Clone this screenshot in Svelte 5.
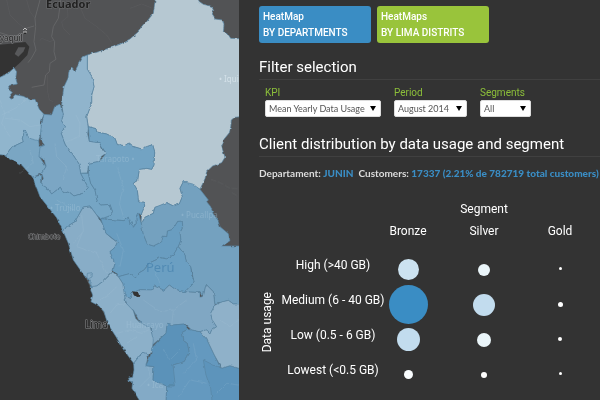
<script>
  const departments = [
    { name: 'Loreto', fill: '#b6c8d2', d: 'M262 165L300 154L360 133L390 117L415 95L440 65L460 40L468 -20L590 -20L597 4L610 13L635 19L641 32L637 45L645 57L667 60L672 75L670 95L685 104L692 115L740 117V348L704 352L694 360L692 384L688 398L672 418L665 440L675 472L665 488L638 498L620 515L615 536L600 568L578 557L550 545L540 565L547 590L538 612L520 618L500 608L480 618L465 622L460 640L435 652L423 672L425 640L434 618L432 608L415 602L412 570L400 550L413 540L418 508L440 505L455 508L462 495L464 455L458 434L440 440L425 447L395 438L385 430L374 437L352 434L345 415L320 402L290 396L288 386L265 380L260 350L275 310L275 285L282 260L276 230L262 208Z' },
    { name: 'Piura', fill: '#90b5cd', d: 'M-20 238L0 232L25 220L42 204L50 215L47 235L52 252L32 256L25 265L38 275L27 290L34 298L45 284L70 289L90 299L105 298L118 328L132 343L122 368L125 390L116 422L103 428L88 415L75 390L67 415L70 425L35 442L17 466L-20 462Z' },
    { name: 'Lambayeque', fill: '#7aa6c3', d: 'M75 390L88 415L116 422L118 440L135 435L118 470L138 500L125 520L98 532L65 495L15 468L35 442L70 425L67 415Z' },
    { name: 'Amazonas', fill: '#90b4cc', d: 'M262 165L250 170L235 194L225 213L215 201L208 210L204 235L192 260L185 312L190 345L184 362L196 380L183 402L196 435L216 460L237 492L242 520L262 519L266 490L300 484L303 470L318 460L307 446L298 428L268 424L263 402L265 385L260 350L275 310L275 285L282 260L276 230L262 208Z' },
    { name: 'Cajamarca', fill: '#7ba6c4', d: 'M132 343L155 345L164 320L180 312L190 345L184 362L196 380L183 402L196 435L216 460L237 492L242 520L265 563L248 580L222 588L204 573L190 578L181 562L155 582L143 565L125 554L130 535L125 520L138 500L133 480L117 470L120 442L134 436L122 418L122 390Z' },
    { name: 'La Libertad', fill: '#75a5c4', d: 'M98 532L125 525L125 554L143 565L155 582L181 562L190 578L204 573L222 588L248 580L265 563L242 520L265 520L272 550L285 570L292 603L302 615L330 613L338 635L325 650L302 656L290 645L270 618L250 621L225 665L200 680L190 695L170 653L120 590Z' },
    { name: 'San Martin', fill: '#72a3c3', d: 'M265 380L288 386L290 396L320 402L345 415L352 434L374 437L385 430L395 438L425 447L440 440L458 434L464 455L462 495L455 508L440 505L418 508L413 540L400 550L412 570L415 602L432 608L434 618L423 645L416 640L408 652L409 670L400 682L396 665L390 672L385 652L372 662L302 656L325 650L338 635L330 613L302 615L292 603L285 570L272 550L265 520L266 490L300 484L318 460L298 428L268 424Z' },
    { name: 'Ancash', fill: '#88adc7', d: 'M190 695L200 680L225 665L250 621L270 618L290 645L310 675L318 700L337 716L352 727L345 742L330 755L336 768L345 790L338 816L325 828L312 842L290 858L276 862L262 840L220 780L205 730Z' },
    { name: 'Huanuco', fill: '#699dc0', d: 'M302 656L372 662L385 652L390 672L396 665L400 682L409 670L408 652L416 640L424 672L430 703L442 732L460 738L485 725L490 708L500 710L502 693L518 688L533 664L547 663L548 680L540 695L543 720L535 740L520 765L500 777L482 773L450 788L432 810L418 818L405 832L392 820L355 830L340 810L345 790L330 755L345 742L352 727L318 700Z' },
    { name: 'Ucayali', fill: '#74a1bf', d: 'M424 672L435 652L460 640L465 622L500 608L520 618L538 612L547 590L540 565L550 545L578 552L600 568L625 600L620 605L632 620L640 642L655 662L660 680L685 701L690 722L668 738L740 738V912L700 912L685 901L663 907L645 910L640 875L618 853L610 888L600 878L555 875L582 845L572 800L558 784L555 765L535 740L543 720L540 695L548 680L547 663L533 664L518 688L502 693L500 710L490 708L485 725L460 738L442 732L430 703Z' },
    { name: 'Pasco', fill: '#6b9fc2', d: 'M355 830L392 820L405 832L418 818L432 810L450 788L482 773L500 777L520 765L535 740L555 765L558 784L572 800L575 825L582 845L555 875L525 868L508 855L492 871L462 858L455 870L420 869L395 880L390 893L372 885L368 850Z' },
    { name: 'Junin', fill: '#80a7c3', d: 'M372 885L390 893L395 880L420 869L455 870L462 858L492 871L508 855L525 868L555 875L600 878L600 892L610 890L618 853L640 875L645 915L632 940L637 960L650 980L635 990L630 1002L617 990L600 995L575 990L555 972L520 975L502 970L498 1000L457 1035L454 985L420 968L400 930L384 925Z' },
    { name: 'Lima', fill: '#8cb0c9', d: 'M338 816L355 830L368 850L377 908L400 932L407 955L420 968L450 980L460 1020L457 1048L445 1065L425 1060L401 1090L370 1048L348 1010L335 990L322 968L312 935L297 918L273 905L278 886L270 860L290 858L312 842Z' },
    { name: 'Ica', fill: '#83aac6', d: 'M401 1090L425 1060L445 1065L438 1097L462 1100L459 1140L500 1158L498 1220H430L396 1165L398 1145L388 1142L386 1134L398 1132L402 1110Z' },
    { name: 'Huancavelica', fill: '#5b92b9', d: 'M502 970L520 975L552 972L564 988L547 997L552 1022L562 1030L569 1060L552 1085L519 1095L526 1122V1158H500L459 1140L462 1100L438 1097L453 1062L455 1044L485 1012L498 1000Z' },
    { name: 'Ayacucho', fill: '#6499bf', d: 'M564 988L575 990L600 995L620 1017L643 1065L660 1100L690 1115V1220H498L500 1158H526L519 1095L552 1085L569 1060L562 1030L552 1022L547 997Z' },
    { name: 'Apurimac', fill: '#5d94bb', d: 'M610 1080L640 1095L665 1105L690 1097L740 1112V1220H638L632 1165L618 1125Z' },
    { name: 'Cusco', fill: '#8fb1c9', d: 'M645 915L663 907L685 901L700 912H740V1112L690 1097L665 1105L643 1065L620 1017L600 995L617 990L630 1002L635 990L650 980L637 960L632 940Z' }
  ];

  const segments = ['Bronze', 'Silver', 'Gold'];
  const usage = [
    { label: 'High (>40 GB)', dots: [[21, '#cce2f0'], [12, '#eaf5f9'], [3, '#fff']] },
    { label: 'Medium (6 - 40 GB)', dots: [[39, '#3a8dc4'], [22, '#c2dcee'], [5, '#fff']] },
    { label: 'Low (0.5 - 6 GB)', dots: [[23, '#c2dcee'], [14, '#eaf5f9'], [4, '#fff']] },
    { label: 'Lowest (<0.5 GB)', dots: [[9, '#fafdff'], [6, '#fff'], [3, '#fff']] }
  ];
</script>

<div class="app">
  <svg class="map" viewBox="0 0 240 400" preserveAspectRatio="xMinYMin slice" role="img" aria-label="Heat map of Peru by department">
    <defs>
      <filter id="rough" x="-5%" y="-5%" width="110%" height="110%" color-interpolation-filters="sRGB">
        <feTurbulence type="fractalNoise" baseFrequency="0.06" numOctaves="2" seed="4" result="n" />
        <feDisplacementMap in="SourceGraphic" in2="n" scale="9" xChannelSelector="R" yChannelSelector="G" />
      </filter>
    </defs>
    <rect width="240" height="400" fill="#525355" />
    <g transform="scale(.33333)">
      <path fill="#333" d="M-20 137L30 131L76 126L88 140L82 165L60 188L42 204L0 232L-20 240ZM-20 458L0 458L64 490L100 532L194 695L274 870L326 968L404 1090L400 1165L440 1230H-20Z" />
      <path fill="#58595b" d="M44 162L55 142L76 142L70 155L55 170Z" />
      <g fill="none" stroke="#696a6c" stroke-width="3" opacity=".8">
        <path d="M120 0L105 55L107 80L102 125L108 150L94 175L84 188M182 0L175 55L160 80L155 110L164 125L162 155L168 178L150 190L148 215L137 225L132 255L95 262M0 98L38 110L76 98L78 85L102 78" />
        <path stroke-width="2" opacity=".5" d="M20 0L30 45L55 70L76 85M240 20L255 55L290 80L320 105L335 128M200 0L204 50L185 65L190 85L210 105M80 0L90 35L105 55M160 120L150 125L125 115L120 122M142 225V270L148 300L160 305M390 25L425 12L455 24" />
        <path stroke-width="3" opacity=".5" stroke-dasharray="18 5" d="M632 538L660 548L690 565L717 566M695 578L717 590" />
      </g>
      <g filter="url(#rough)">
        <g stroke="#5885a3" stroke-width="2" stroke-linejoin="round">
          {#each departments as dep (dep.name)}
            <path d={dep.d} fill={dep.fill} />
          {/each}
        </g>
        <path fill="#333" d="M397 874L414 876L419 890L408 891L401 885Z" />
        <path fill="none" stroke="#5885a3" stroke-width="2" d="M276 862L270 846L260 840L262 820L277 818L276 831L266 836L275 850" />
        <g fill="none" stroke="#b9d3e3" stroke-width="2" opacity=".2">
          <path d="M0 300L15 340L5 370L30 410M15 355L60 360L90 380L122 375M5 345L55 320L75 300M228 345L240 370L238 410L200 425M165 430L170 470L200 500L190 540M350 500L370 560L358 610L372 655M245 645L250 690L230 740L290 760L320 820M300 900L330 880L350 860M330 940L350 915L378 910M350 1000L390 990L425 1000L455 985M380 1030L410 1010M430 900L480 935L520 930L560 900M520 930L515 975M490 1050L510 1080L540 1050M550 1120L590 1080L580 1030M535 1190L570 1140L620 1150M650 1180L680 1150L717 1155M660 960L690 980L717 960M420 1160L450 1130L445 1100M350 700L370 750L360 800M460 800L480 850M220 730L245 700M60 520L100 490L90 450M170 600L220 630" />
        </g>
      </g>
    </g>
    <g class="places">
      <text x="46" y="8" class="country">Ecuador</text>
      <text x="0" y="41">yaquil</text>
      <text x="28" y="239" class="small">Chimbote</text>
      <text x="85" y="328" class="capital">Lima</text>
    </g>
    <circle cx="25" cy="33" r="1" fill="#1c1c1c" />
    <path d="M23 30L25 28L27 30M23 32H27" stroke="#bbb" fill="none" />
    <g class="faint">
      <text x="96" y="162">Tarapoto •</text>
      <text x="50" y="211">• Trujillo</text>
      <text x="181" y="218">• Pucallpa</text>
      <text x="219" y="82" class="light">• Iqui</text>
      <text x="126" y="328">Huancayo •</text>
      <text x="147" y="388">• Ica</text>
      <text x="146" y="272" class="peru">Perú</text>
    </g>
    <rect x="239" width="1" height="400" fill="#333" />
  </svg>

  <main>
    <nav>
      <button class="blue" type="button">HeatMap<br />BY DEPARTMENTS</button>
      <button class="green" type="button">HeatMaps<br />BY LIMA DISTRITS</button>
    </nav>

    <h2>Filter selection</h2>
    <form>
      <div class="kpi">
        <label for="kpi">KPI</label>
        <div class="pick"><select id="kpi"><option>Mean Yearly Data Usage</option></select></div>
      </div>
      <div class="period">
        <label for="period">Period</label>
        <div class="pick"><select id="period"><option>August 2014</option></select></div>
      </div>
      <div class="segments">
        <label for="segments">Segments</label>
        <div class="pick"><select id="segments"><option>All</option></select></div>
      </div>
    </form>

    <h2>Client distribution by data usage and segment</h2>
    <p><span>Departament: <b>JUNIN</b></span><span>Customers: <b>17337 (2.21% de 782719 total customers)</b></span></p>

    <table>
      <colgroup><col class="c-axis" /><col class="c-label" /><col class="c-side" /><col class="c-mid" /><col class="c-side" /></colgroup>
      <thead>
        <tr><td colspan="2"></td><th colspan="3">Segment</th></tr>
        <tr class="names">
          <td colspan="2"></td>
          {#each segments as s (s)}<th scope="col">{s}</th>{/each}
        </tr>
      </thead>
      <tbody>
        {#each usage as row, i (row.label)}
          <tr>
            {#if i === 0}<th class="axis" rowspan="4"><span>Data usage</span></th>{/if}
            <th class="row" scope="row">{row.label}</th>
            {#each row.dots as [size, color]}
              <td><i style="width:{size}px;height:{size}px;background:{color}"></i></td>
            {/each}
          </tr>
        {/each}
      </tbody>
    </table>
  </main>
</div>

<style>
  :global(body) { background: #333; }
  .app {
    display: flex;
    min-height: 100vh;
    background: #333;
    color: #fff;
    font-family: Roboto, "Liberation Sans", sans-serif;
  }
  .map { flex: 0 0 40%; width: 40%; height: 100vh; display: block; }
  .map text { font-family: "Noto Sans", sans-serif; font-size: 8px; }
  .places text { fill: #222; stroke: #8a8b8d; stroke-width: 1px; paint-order: stroke; }
  .places .country { font-size: 11px; font-weight: 700; stroke: #6c6d6f; }
  .places .capital { font-size: 10px; }
  .places .small { font-size: 7px; }
  .faint text { fill: #a9c8dc; opacity: .4; }
  .faint .light { fill: #dbe7ee; opacity: .8; }
  .faint .peru { font-size: 13px; fill: #4682ae; opacity: .7; }

  main { flex: 1; min-width: 0; padding: 6px 0 0 19px; }
  nav { display: flex; gap: 6px; }
  button {
    width: 112px;
    height: 37px;
    padding: 1px 4px 0;
    border: 0;
    border-radius: 3px;
    color: #fff;
    font: 500 10px/16px Roboto, sans-serif;
    text-align: left;
    white-space: nowrap;
  }
  .blue { background: #3a8dc4; }
  .green { background: #99c43b; }

  h2 {
    margin: 15px 0 0;
    padding-bottom: 2px;
    border-bottom: 1px solid #404040;
    font-size: 15px;
    font-weight: 400;
    line-height: 19px;
    white-space: nowrap;
  }
  form { display: flex; gap: 13px; padding: 6px 6px 0; }
  label { display: block; color: #8cbf3a; font-size: 10px; line-height: 14px; }
  .pick { position: relative; }
  .pick::after {
    content: "";
    position: absolute;
    right: 5px;
    top: 6px;
    border: 3px solid transparent;
    border-top: 5px solid #000;
    border-bottom: 0;
  }
  select {
    display: block;
    appearance: none;
    width: 100%;
    height: 17px;
    padding: 0 3px;
    border: 1px solid #ddd;
    border-radius: 2px;
    background: #fff;
    color: #555;
    font: 9px Lato, sans-serif;
  }
  .kpi { width: 116px; }
  .period { width: 73px; }
  .segments { width: 51px; }
  form + h2 { margin-top: 18px; }
  p {
    display: flex;
    gap: 5px;
    margin: 8px 0 0;
    color: #ddd;
    font-family: Lato, sans-serif;
    font-size: 10px;
    font-weight: 700;
    line-height: 16px;
    white-space: nowrap;
  }
  p b { color: #3a8dc4; }

  table { border-spacing: 0; table-layout: fixed; width: 321px; margin-top: 17px; }
  .c-axis { width: 17px; }
  .c-label { width: 112px; }
  .c-side { width: 40px; }
  .c-mid { width: 112px; }
  th, td { padding: 0; text-align: center; vertical-align: middle; }
  th { font-size: 12px; font-weight: 400; line-height: 16px; white-space: nowrap; }
  thead tr { height: 22px; }
  .names th { padding: 3px 0 13px; }
  tbody tr { height: 35px; }
  th.row { padding: 0 0 9px 2px; }
  .axis span { display: block; writing-mode: vertical-rl; transform: rotate(180deg); }
  i { display: block; margin: -3px auto; border-radius: 50%; }
</style>
